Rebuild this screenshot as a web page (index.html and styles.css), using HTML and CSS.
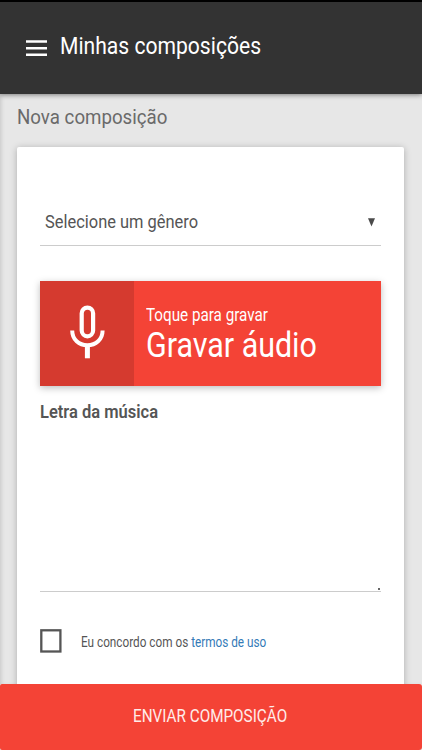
FILE: index.html
```html
<!DOCTYPE html>
<html lang="pt-BR">
<head>
<meta charset="utf-8">
<title>Minhas composições</title>
<link rel="stylesheet" href="styles.css">
</head>
<body>
<div class="app">
  <header class="topbar">
    <svg class="menu" width="21" height="17" viewBox="0 0 21 17" fill="#fff"><path d="M0 .3h21v2.400H0zM0 7.100h21v2.400H0zM0 13.600h21v2.400H0z"/></svg>
    <h1 class="title"><span class="t">Minhas composições</span></h1>
  </header>
  <main class="content">
    <h2 class="subtitle"><span class="t">Nova composição</span></h2>
    <section class="card">
      <div class="select"><span class="t">Selecione um gênero</span>
        <svg class="arrow" width="8" height="9" viewBox="0 0 8 9"><path d="M0 .3h7L3.500 8.600z" fill="#4a4a4a"/></svg>
      </div>
      <div class="record">
        <div class="mic">
          <svg width="36" height="54" viewBox="0 0 36 54" fill="none" stroke="#fff"><rect x="11.700" y="2.600" width="11.400" height="28.700" rx="5.700" stroke-width="4.200"/><path d="M2.200 25.500C2.200 34.500 9 40.300 17.400 40.300S32.600 34.500 32.600 25.500" stroke-width="4"/><path d="M17.400 40v13.300" stroke-width="5"/></svg>
        </div>
        <div class="record-text">
          <div class="hint"><span class="t">Toque para gravar</span></div>
          <div class="action"><span class="t">Gravar áudio</span></div>
        </div>
      </div>
      <div class="label"><span class="t">Letra da música</span></div>
      <div class="textarea"><i class="grip"></i></div>
      <div class="agree"><svg class="box" width="22" height="24" viewBox="0 0 22 24"><rect x="1.300" y="1.300" width="19.100" height="21.200" fill="none" stroke="#555" stroke-width="2.300"/></svg><span class="t">Eu concordo com os <a>termos de uso</a></span></div>
    </section>
  </main>
  <footer class="submit"><span class="t">ENVIAR COMPOSIÇÃO</span></footer>
</div>
</body>
</html>
```
FILE: styles.css
```css
* { box-sizing: border-box; }
body { margin: 0; font-family: Roboto, "Liberation Sans", sans-serif; color: #555; }
.app { width: 422px; height: 750px; display: flex; flex-direction: column; overflow: hidden; background: #e7e7e7; }
.t { display: inline-block; white-space: nowrap; transform-origin: 0 50%; }
h1, h2 { margin: 0; font-weight: 400; }
.topbar { flex: none; height: 94px; border-top: 2px solid #000; background: #333; display: flex; padding-left: 26px; box-shadow: 0 1px 5px rgba(0,0,0,.45); position: relative; z-index: 1; }
.menu { margin-top: 37.500px; flex: none; }
.title { margin: 29px 0 0 13px; font-size: 24px; line-height: 30px; color: #fff; }
.title .t { transform: scaleX(.879); }
.content { flex: 1; min-height: 0; padding: 0 18px 0 17px; box-shadow: inset 3px 0 4px -2px rgba(0,0,0,.15); }
.subtitle { margin-top: 8px; height: 30px; font-size: 20.500px; line-height: 30px; color: #6a6a6a; }
.subtitle .t { transform: scaleX(.912); }
.card { margin-top: 15px; height: 560px; background: #fff; border-radius: 2px; padding: 49px 23px 0; box-shadow: 0 1px 7px rgba(0,0,0,.26); }
.select { height: 50px; border-bottom: 1px solid #ccc; padding: 11px 5px 0; display: flex; justify-content: space-between; font-size: 19px; line-height: 30px; }
.select .t { transform: scaleX(.865); }
.arrow { margin-top: 11px; }
.record { margin-top: 34.500px; height: 105.500px; display: flex; background: #f44336; color: #fff; box-shadow: 0 2px 7px rgba(0,0,0,.26); }
.mic { width: 94px; background: #d53a2f; padding: 24.500px 0 0 30px; }
.record-text { padding: 19.500px 0 0 12px; }
.hint { height: 30px; font-size: 17.500px; line-height: 30px; }
.hint .t { transform: scaleX(.87); }
.action { height: 40px; margin-top: -4px; font-size: 35px; line-height: 40px; }
.action .t { transform: scaleX(.869); }
.label { margin-top: 11px; height: 30px; font-size: 18.500px; line-height: 30px; font-weight: 600; }
.label .t { transform: scaleX(.892); }
.textarea { height: 165px; border-bottom: 1px solid #ccc; display: flex; justify-content: flex-end; align-items: flex-end; padding: 0 1px 1px; }
.grip { width: 2px; height: 2px; background: #666; }
.agree { margin-top: 37px; display: flex; font-size: 14px; line-height: 26px; }
.agree .t { margin-left: 19px; transform: scaleX(.84); }
.agree a { color: #337ab7; }
.box { flex: none; }
.submit { flex: none; position: relative; z-index: 1; height: 66px; background: #f44336; border-radius: 2px 3px 3px 2px; color: #ffecea; padding: 17px 0 0 133px; font-size: 18px; line-height: 30px; }
.submit .t { transform: scaleX(.848); }
```
